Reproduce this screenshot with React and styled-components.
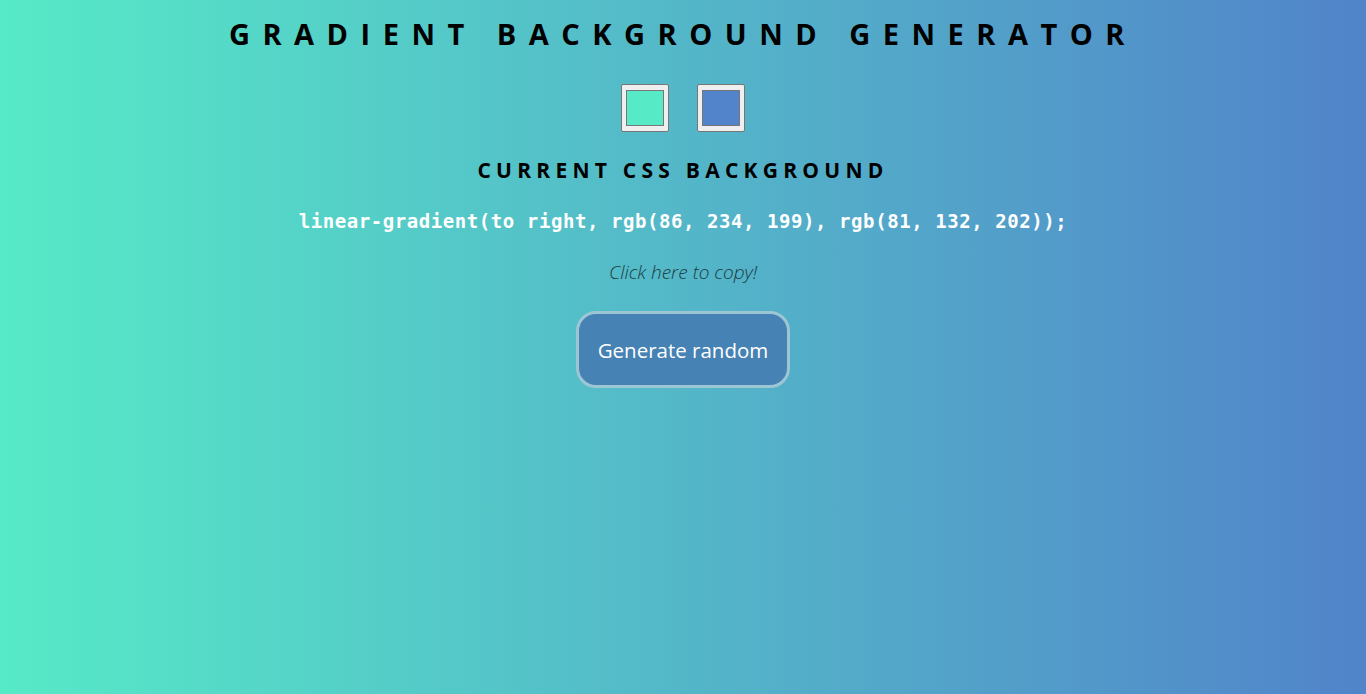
import React, { useState } from "react";
import styled, { createGlobalStyle } from "styled-components";

const GlobalStyle = createGlobalStyle`
  html, body {
    margin: 0;
    padding: 0;
    height: 100%;
  }
  body {
    background: linear-gradient(to right, rgb(86, 234, 199), rgb(81, 132, 202));
    font-family: "Open Sans", "Noto Sans", sans-serif;
    overflow: hidden;
  }
`;

const Page = styled.div`
  min-height: 100vh;
  display: flex;
  flex-direction: column;
  align-items: center;
  text-align: center;
`;

const Title = styled.h1`
  margin: 16px 0 0;
  font-size: 29px;
  line-height: 36px;
  font-weight: 700;
  letter-spacing: 12.5px;
  color: #000;
`;

const Pickers = styled.div`
  display: flex;
  gap: 28px;
  margin-top: 32px;
`;

const Swatch = styled.div`
  box-sizing: border-box;
  width: 48px;
  height: 48px;
  padding: 5px 4px;
  background: #efefef;
  border: 1px solid #767676;
  border-radius: 2px;
  cursor: pointer;
`;

const SwatchColor = styled.div`
  box-sizing: border-box;
  width: 100%;
  height: 100%;
  border: 1px solid #777;
  background: ${(p) => p.$color};
`;

const Heading = styled.h3`
  margin: 24px 0 0;
  font-size: 21px;
  line-height: 28px;
  font-weight: 700;
  letter-spacing: 5.25px;
  color: #000;
`;

const Code = styled.div`
  margin-top: 25px;
  font-family: "DejaVu Sans Mono", "Liberation Mono", monospace;
  font-weight: 700;
  font-size: 19px;
  line-height: 24px;
  letter-spacing: 0.57px;
  color: #fff;
`;

const Copy = styled.p`
  margin: 27px 0 0;
  font-size: 19px;
  line-height: 24px;
  font-style: italic;
  font-weight: 300;
  color: #1d3c44;
  cursor: pointer;
`;

const Button = styled.button`
  margin-top: 27px;
  box-sizing: border-box;
  width: 214px;
  height: 77px;
  border: 3px solid #9cc6d4;
  border-radius: 20px;
  background: #4682b4;
  color: #fff;
  font-family: "Open Sans", "Noto Sans", sans-serif;
  font-size: 20.5px;
  cursor: pointer;
`;

const App = () => {
  const [color1] = useState("#56eac7");
  const [color2] = useState("#5184ca");

  return (
    <Page>
      <GlobalStyle />
      <Title>GRADIENT BACKGROUND GENERATOR</Title>
      <Pickers>
        <Swatch>
          <SwatchColor $color={color1} />
        </Swatch>
        <Swatch>
          <SwatchColor $color={color2} />
        </Swatch>
      </Pickers>
      <Heading>CURRENT CSS BACKGROUND</Heading>
      <Code>linear-gradient(to right, rgb(86, 234, 199), rgb(81, 132, 202));</Code>
      <Copy>Click here to copy!</Copy>
      <Button>Generate random</Button>
    </Page>
  );
};

export default App;
